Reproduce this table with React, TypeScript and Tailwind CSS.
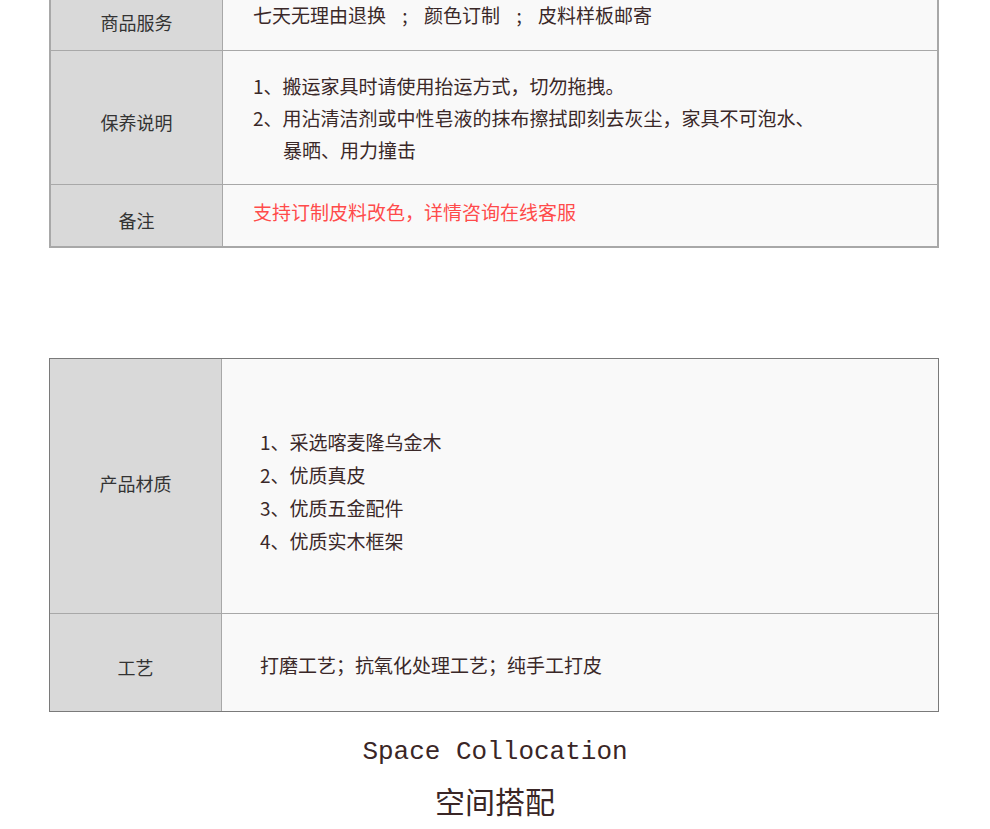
const cjk = { fontFamily: '"Noto Sans CJK SC", "Noto Sans", sans-serif' };

type Row = {
  label: string;
  height: string;
  labelPad: string;
  body: React.ReactNode;
  bodyClass: string;
};

const Semi = () => <span className="inline-block w-[38px] text-center">;</span>;

const careRows: Row[] = [
  {
    label: "商品服务",
    height: "h-[50px]",
    labelPad: "pb-[6px]",
    bodyClass: "items-start pt-[2px] pl-[30px]",
    body: (
      <p className="leading-[26px]">
        七天无理由退换
        <Semi />
        颜色订制
        <Semi />
        皮料样板邮寄
      </p>
    ),
  },
  {
    label: "保养说明",
    height: "h-[134px]",
    labelPad: "pt-[9px]",
    bodyClass: "items-center pl-[30px]",
    body: (
      <div className="leading-[32px]">
        <p>1、搬运家具时请使用抬运方式，切勿拖拽。</p>
        <p>2、用沾清洁剂或中性皂液的抹布擦拭即刻去灰尘，家具不可泡水、</p>
        <p className="pl-[30px]">暴晒、用力撞击</p>
      </div>
    ),
  },
  {
    label: "备注",
    height: "h-[62px]",
    labelPad: "pt-[9px]",
    bodyClass: "items-start pt-[11px] pl-[30px]",
    body: <p className="leading-[32px] text-[#ff4b4b]">支持订制皮料改色，详情咨询在线客服</p>,
  },
];

const materialRows: Row[] = [
  {
    label: "产品材质",
    height: "h-[254px]",
    labelPad: "pb-[6px]",
    bodyClass: "items-center pt-[10px] pl-[38px]",
    body: (
      <div className="leading-[33px]">
        <p>1、采选喀麦隆乌金木</p>
        <p>2、优质真皮</p>
        <p>3、优质五金配件</p>
        <p>4、优质实木框架</p>
      </div>
    ),
  },
  {
    label: "工艺",
    height: "h-[98px]",
    labelPad: "pt-[9px]",
    bodyClass: "items-center pt-[5px] pl-[38px]",
    body: <p className="leading-[32px]">打磨工艺；抗氧化处理工艺；纯手工打皮</p>,
  },
];

function SpecTable({ rows, outer }: { rows: Row[]; outer: string }) {
  return (
    <div className={`w-[890px] ml-[49px] ${outer}`}>
      {rows.map((r, i) => (
        <div key={r.label} className={`flex ${r.height} ${i > 0 ? "border-t border-[#a8a8a8]" : ""}`}>
          <div
            className={`w-[172px] shrink-0 bg-[#d9d9d9] border-r border-[#a8a8a8] flex items-center justify-center text-[18px] text-[#333] ${r.labelPad}`}
          >
            {r.label}
          </div>
          <div className={`flex-1 bg-[#f9f9f9] flex text-[19px] text-[#3a2828] ${r.bodyClass}`}>{r.body}</div>
        </div>
      ))}
    </div>
  );
}

export default function App() {
  return (
    <div className="w-[990px] h-[829px] bg-white overflow-hidden" style={cjk}>
      <SpecTable rows={careRows} outer="border-x-2 border-b-2 border-[#a8a8a8]" />
      <div className="h-[110px]" />
      <SpecTable rows={materialRows} outer="border border-[#7a7a7a]" />
      <div className="flex flex-col items-center text-[#3a2626]">
        <h2 className="mt-[20px] text-[26px] leading-[40px]" style={{ fontFamily: '"Liberation Mono", monospace' }}>
          Space Collocation
        </h2>
        <h3 className="mt-[8px] text-[30px] leading-[40px]">空间搭配</h3>
      </div>
    </div>
  );
}
